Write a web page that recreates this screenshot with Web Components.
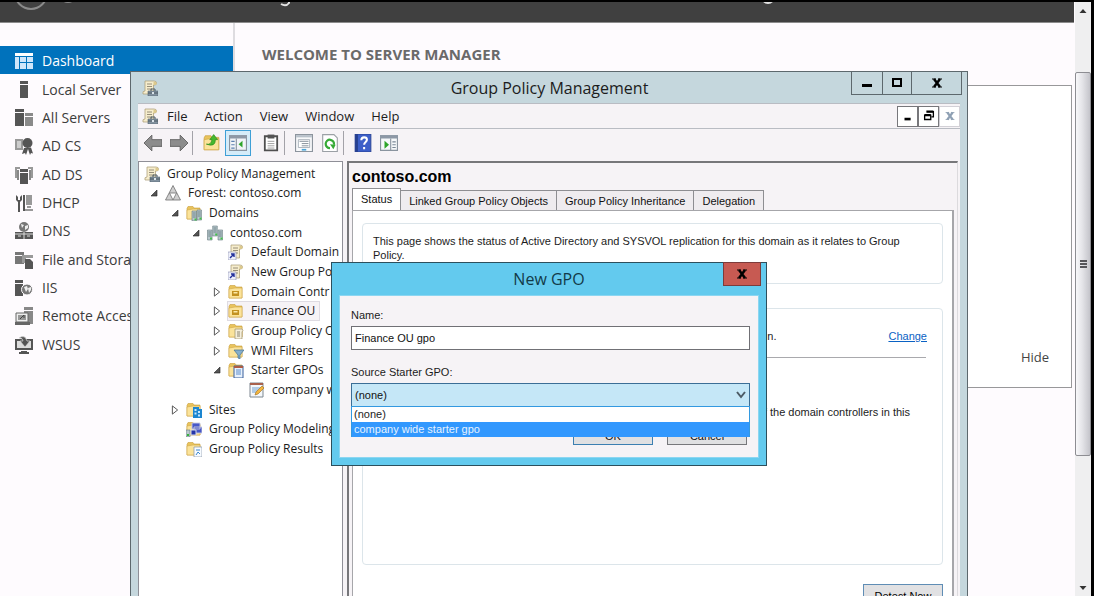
<!DOCTYPE html>
<html lang="en">
<head>
<meta charset="utf-8">
<title>Server Manager</title>
<style>
  html, body {
    height: 100%;
    margin: 0;
  }
  body {
    overflow: hidden;
    background: #fefbfe;
    font: 13px/18px "Open Sans", "Noto Sans", sans-serif;
    color: #1c1c1c;
    --classic: 11px/14px "Liberation Sans", Arial, sans-serif;
    --face: #f6f3f6;
  }
</style>
</head>
<body>
<server-manager></server-manager>

<script>
const folder = '<path d="M1 3.5l1-2h5l1 1.500h6V14H1z" fill="#e9c45c" stroke="#c99e3a" stroke-width=".6"/><path d="M1 14V5l6-1h7v10z" fill="#fbe39a" stroke="#d0a848" stroke-width=".6"/>'
const scroll = '<path d="M3 1h9q2.500 0 2.500 2t-2 2h-1V14H1q-1-3 2-3z" fill="#f6edcd" stroke="#a89870" stroke-width=".7"/><path d="M5 4h5M5 6.500h5M5 9h5" stroke="#8c8571" stroke-width=".9"/><path d="M11.500 5V2q2-1 3 1t-3 2z" fill="#dcc98c"/>'
const server = (x, y) => `<path d="M${x} ${y}h4.600v10H${x}z" fill="#b9c8cd" stroke="#667a80" stroke-width=".6"/><path d="M${x + 0.800} ${y + 2}h3M${x + 0.800} ${y + 4}h3M${x + 0.800} ${y + 6}h3" stroke="#5b7379" stroke-width=".8"/><path d="M${x + 2.500} ${y + 7.500}h2v2h-2z" fill="#42c24a"/>`

const icons = {
  dashboard: '<path d="M0 1h18v3H0zM0 5h4v12H0zM5 5h6v5H5zM12 5h6v5h-6zM5 11h6v6H5zM12 11h6v6h-6z" fill="#cfe6fa"/><path d="M0 1h18v3H0z" fill="#fff"/>',
  local: '<path d="M5 0h8v3H5z" fill="#555"/><path d="M5 4h8v13H5z" fill="#555"/>',
  all: '<path d="M0 0h9v3H0zM0 4h9v13H0z" fill="#555"/><path d="M10 4h8v3h-8zM10 8h8v9h-8z" fill="#8a8a8a"/>',
  cert: '<path d="M0 2h8v11H0z" fill="#999"/><path d="M2 4h4v7H2z" fill="#ccc"/><circle cx="12.500" cy="6" r="5" fill="#555"/><path d="M9 11l-2 6 3-1 1 2 2-6 2 6 1-2 2 .5-2-6z" fill="#555"/>',
  adds: '<path d="M0 1h5v2H2v9H0zM13 1h5v11h-2V3h-3z" fill="#999"/><path d="M2 4h2v10H2zM14 4h2v10h-2z" fill="#888"/><path d="M5 3h8v3H5zM5 7h8v11H5z" fill="#555"/>',
  dhcp: '<path d="M1 1l2 2v3h2V3l2-2v5L5 8v10H3V8L1 6z" fill="#555"/><path d="M8 1h2v16H8z" fill="#555"/><path d="M11 1h6v10h-6zM12 12h4v2h-4zM10 15h8v2h-8z" fill="#999"/>',
  dns: '<circle cx="9" cy="5" r="5" fill="#777"/><path d="M6 2l3 1-2 3zM10 4l3-1v3l-3 2z" fill="#eee"/><path d="M0 10h18v7H0z" fill="#555"/><path d="M9 10v7M3 14h3M12 14h3M0 12h18" stroke="#ddd"/>',
  files: '<path d="M0 1h9v3H0zM0 5h9v8H0z" fill="#777"/><path d="M7 4h11v3h-7v5H7z" fill="#999"/><path d="M10 8h5l3 3v7h-8z" fill="#555"/>',
  iis: '<path d="M0 1h8v3H0zM0 5h8v12H0z" fill="#555"/><circle cx="12" cy="10.500" r="5.500" fill="#777" stroke="#fefbfe"/><path d="M9 8l3-1 1 3-2 3zM13 9l3-1v3l-2 3z" fill="#eee"/>',
  remote: '<path d="M9 0h9v3H9zM9 4h9v13H9z" fill="#888"/><path d="M1 6h12v9H1z" fill="#eee" stroke="#666"/><path d="M3 8h8v5H3z" fill="#999"/><path d="M0 15h15v3H0z" fill="#666"/><path d="M5 12l4-4M9 8v3" stroke="#444" fill="none"/>',
  wsus: '<path d="M0 3h18v11H0zM6 15h6v1h2v2H4v-2h2z" fill="#555"/><path d="M2 5h14v7H2z" fill="#ddd"/><path d="M4 2q6-4 8 3h3l-5 6-5-6h3q0-3-4-3z" fill="#555" stroke="#ddd" stroke-width=".7"/>',

  gpm: scroll + '<path d="M6 11h10v5H6z" fill="#8393a0" stroke="#536370" stroke-width=".6"/><path d="M9 11V9h4v2M6 13h10" fill="none" stroke="#4a5862"/><path d="M10 12h2v2h-2z" fill="#dbe4ea"/>',
  forest: '<path d="M8 .5L15.500 15H.5z" fill="#cfcfcf" stroke="#707070" stroke-width=".8"/><path d="M4.500 8h7L8 15z" fill="#fff" stroke="#707070" stroke-width=".8"/>',
  domains: folder + server(6, 6) + server(11, 5),
  domain: server(0.500, 5) + server(11, 5) + server(5.700, 1),
  gpolink: scroll + '<path d="M0 8h8v8H0z" fill="#eef0fa" stroke="#8a8fae" stroke-width=".6"/><path d="M2 14l4-4M3 10h3v3" stroke="#23309a" stroke-width="1.400" fill="none"/>',
  ou: folder + '<path d="M4 7h7v5H4z" fill="#c39120"/><path d="M5.500 8h4v1.500h-4z" fill="#fbe9a8"/>',
  objects: folder + '<path d="M7 6h7q2 1 0 3v7H7z" fill="#f5efdc" stroke="#9c8f6a" stroke-width=".7"/><path d="M9 9h3M9 11h3M9 13h3" stroke="#8c8571"/>',
  wmi: folder + '<path d="M6 7h10l-4 5v4l-2-1v-3z" fill="#86aecb" stroke="#44708f" stroke-width=".7"/>',
  starter: folder + '<path d="M6 4h9v12H6z" fill="#e8f1fb" stroke="#385f9c"/><path d="M6 4h9v2H6z" fill="#ae5b45"/><path d="M8 8h5M8 10h5M8 12h5" stroke="#5d8ccb"/>',
  gpo: '<path d="M1 1h13v14H1z" fill="#f4f7fa" stroke="#7d8790"/><path d="M1 1h13v2H1z" fill="#a9614c"/><path d="M3 6h9M3 8h6M3 10h4" stroke="#6f9fd0"/><path d="M6 13l1-3 6-6 2 2-6 6z" fill="#f4b63e" stroke="#9a6b1c" stroke-width=".6"/>',
  sites: folder + '<path d="M7 5h6v2h3v9H7z" fill="#1c86d0"/><path d="M8.500 7h2v2h-2zM8.500 10.500h2v2h-2zM12 9h2v2h-2zM12 12.500h2v2h-2z" fill="#c3e6ff"/>',
  modeling: folder + '<path d="M6 2h8v6H6zM8 6h8v6H8z" fill="#4858c8" stroke="#c8cbe0" stroke-width=".9"/><path d="M0 9h4v7H0z" fill="#bac8cd" stroke="#667a80" stroke-width=".6"/><path d="M5 9h5v5H5z" fill="#2736a8" stroke="#d5d8ea"/><path d="M1 13h2v2H1z" fill="#35b33c"/>',
  results: folder + '<path d="M8 6h8v10H8z" fill="#f7fbff" stroke="#8696a6" stroke-width=".7"/><path d="M10 9h4M10 14l2-3 2 2" stroke="#3b86cf" fill="none"/>',

  back: '<path d="M0 8l7-7v4h9v6H7v4z" fill="#8c8c8c" stroke="#606060" stroke-width=".8"/>',
  forward: '<path d="M16 8L9 1v4H0v6h9v4z" fill="#8c8c8c" stroke="#606060" stroke-width=".8"/>',
  up: folder + '<path d="M3 9q4 1 5-4H6l3.500-4.500L13 5h-2q0 7-8 4z" fill="#46b82e" stroke="#2b8a1b" stroke-width=".6"/>',
  pane: '<path d="M.5 1.500h15v13H.5z" fill="#f1f4f8" stroke="#8a949f"/><path d="M0 1h16v3H0z" fill="#8d98a6"/><path d="M2 6.500h3M2 9.500h3M2 12.500h3" stroke="#5c7fae"/><path d="M6.500 4v11" stroke="#8a949f"/><path d="M12 6v6L8.500 9z" fill="#2ea52a"/>',
  clip: '<path d="M2.500 2h11v12.500h-11z" fill="#fff" stroke="#4f4f4f" stroke-width="1.600"/><path d="M5 .5h6V4H5z" fill="#555"/><path d="M5 6.500h6M5 8.500h6M5 10.500h6M5 12.500h6" stroke="#999" stroke-width=".8"/>',
  props: '<path d="M.5.5h15v15H.5z" fill="#f8f9fb" stroke="#8c949d"/><path d="M1 1h14v2H1z" fill="#b8c1ca"/><path d="M3 5h10v7H3z" fill="#fff" stroke="#9ba5af" stroke-width=".7"/><path d="M4 6.500h8M6 8.500h6M6 10.500h6" stroke="#7d8893" stroke-width=".8"/><path d="M6 14h4" stroke="#4ba5d8" stroke-width="1.500"/>',
  refresh: '<path d="M1.500.5h10l3 3v12h-13z" fill="#fff" stroke="#9ba0a5"/><path d="M11.500 9.500A3.700 3.700 0 1 0 8 12.500" fill="none" stroke="#36aa36" stroke-width="2"/><path d="M8 9l5 .5-2 4z" fill="#36aa36"/>',
  help: '<path d="M1 0h14v16H1z" fill="#3c5fc8" stroke="#27408f" stroke-width=".8"/><path d="M1 0h2.500v16H1z" fill="#27408f"/><path d="M6.500 5.500q0-2.500 2.500-2.500t2.500 2.200c0 1.800-2.500 2-2.500 4.300M9 11.500v2" stroke="#fff" stroke-width="1.800" fill="none"/>',
  action: '<path d="M.5 1.500h15v13H.5z" fill="#f6f8fa" stroke="#8a949f"/><path d="M0 1h16v3H0z" fill="#8d98a6"/><path d="M9.500 4v11" stroke="#8a949f"/><path d="M11 7h3M11 9.500h3M11 12h3" stroke="#7a8796"/><path d="M4 6v7l4-3.500z" fill="#2ea52a"/>',

  min: '<path d="M3 9h10v3H3z" fill="currentColor"/>',
  minchild: '<path d="M4 10h7v3H4z" fill="currentColor"/>',
  max: '<path d="M4 4h8v7H4z" fill="none" stroke="currentColor" stroke-width="2"/>',
  close: '<path d="M5 4l6 8M11 4l-6 8" stroke="currentColor" stroke-width="2.500"/><path d="M3 4h4M9 4h4M3 12h4M9 12h4" stroke="currentColor" stroke-width="1"/>',
  restore: '<path d="M6 3h7v6h-2M3 7h7v5H3z" fill="none" stroke="currentColor" stroke-width="1.500"/><path d="M5 3h8M3 7h7" stroke="currentColor" stroke-width="2.500"/>',
  open: '<path d="M12 4v8H4z" fill="#555" stroke="#222" stroke-width=".8"/>',
  shut: '<path d="M4.500 2.500l7 5.500-7 5.500z" fill="#fff" stroke="#555" stroke-width="1.300"/>',
  arrowup: '<path d="M8 6l3.500 4h-7z" fill="#333"/>',
  arrowdown: '<path d="M8 10l3.500-4h-7z" fill="#333"/>'
}

class UiIcon extends HTMLElement {
  constructor () {
    super()
    this.attachShadow({ mode: 'open' })
  }

  connectedCallback () {
    const name = this.getAttribute('name')
    const size = this.getAttribute('grid') || 16

    this.shadowRoot.innerHTML = `
      <style>
        :host { display: block; flex: none; width: var(--size, 16px); height: var(--size, 16px); }
        svg { display: block; width: 100%; height: 100%; }
      </style>
      <svg viewBox="0 0 ${size} ${size}" aria-hidden="true">${icons[name] || ''}</svg>
    `
  }
}

class NavItem extends HTMLElement {
  constructor () {
    super()
    this.attachShadow({ mode: 'open' })
  }

  connectedCallback () {
    this.shadowRoot.innerHTML = `
      <style>
        :host { display: flex; }
        a {
          flex: 1;
          display: flex;
          align-items: center;
          gap: 9px;
          padding: 2px 0 0 15px;
          font-size: 14px;
          white-space: nowrap;
          color: #3c3c3c;
          text-decoration: none;
          --size: 18px;
        }
        :host([current]) a { background: #0072bc; color: #fff; }
      </style>
      <a href="#"><ui-icon name="${this.getAttribute('icon')}" grid="18"></ui-icon><span><slot></slot></span></a>
    `
  }
}

class TreeItem extends HTMLElement {
  constructor () {
    super()
    this.attachShadow({ mode: 'open' })
  }

  connectedCallback () {
    const level = Number(this.getAttribute('level'))
    const arrow = this.getAttribute('arrow') || ''

    this.shadowRoot.innerHTML = `
      <style>
        :host {
          display: flex;
          align-items: center;
          box-sizing: border-box;
          padding-left: ${Math.max(level * 21 - 12, 5)}px;
          white-space: nowrap;
        }
        .arrow { --size: 12px; margin-right: 5px; }
        .label { display: flex; align-items: center; gap: 7px; padding-right: 4px; }
        :host([selected]) .label { background: var(--face); box-shadow: 0 0 0 1px #dedbe2; }
      </style>
      ${level ? `<ui-icon class="arrow" name="${arrow}"></ui-icon>` : ''}
      <span class="label"><ui-icon name="${this.getAttribute('icon')}"></ui-icon><span><slot></slot></span></span>
    `
  }
}

class ScrollBar extends HTMLElement {
  constructor () {
    super()
    this.attachShadow({ mode: 'open' }).innerHTML = `
      <style>
        :host { display: flex; flex-direction: column; width: 16px; background: #efeff0; }
        button { display: block; height: 17px; padding: 0; border: 0; background: none; }
        .before { flex: 53; }
        .after { flex: 123; }
        .thumb {
          flex: 384;
          display: flex;
          flex-direction: column;
          justify-content: center;
          align-items: center;
          gap: 1px;
          border: 1px solid #8d8d92;
          border-radius: 2px;
          background: linear-gradient(90deg, #f8f8fa, #e4e4e8 45%, #c4c4ca);
        }
        .thumb i { width: 7px; height: 2px; background: #55555a; }
      </style>
      <button aria-label="Scroll up"><ui-icon name="arrowup"></ui-icon></button>
      <div class="before"></div>
      <div class="thumb"><i></i><i></i><i></i></div>
      <div class="after"></div>
      <button aria-label="Scroll down"><ui-icon name="arrowdown"></ui-icon></button>
    `
  }
}

class StatusPage extends HTMLElement {
  constructor () {
    super()
    this.attachShadow({ mode: 'open' }).innerHTML = `
      <style>
        :host {
          display: flex;
          flex-direction: column;
          box-sizing: border-box;
          padding: 5px 3px 0;
          border: solid #77777a;
          border-width: 2px 1px 0 2px;
          border-right-color: #dcdadd;
          background: var(--face);
          font: var(--classic);
        }
        h2 { margin: 0 0 2px; font: bold 16px/18px "Liberation Sans", sans-serif; color: #000; }
        .tabs { display: flex; align-items: flex-end; }
        .tabs button {
          height: 20px;
          padding: 0 8px;
          border: 1px solid #8e8e92;
          border-width: 1px 1px 0 0;
          background: #efecef;
          font: inherit;
          color: #111;
        }
        .tabs button.on { height: 23px; margin-bottom: -1px; padding-bottom: 3px; border-left-width: 1px; background: #fff; }
        .page {
          flex: 1;
          display: flex;
          flex-direction: column;
          padding: 12px 9px 0;
          border: 1px solid #a6a6aa;
          border-bottom: 0;
          border-right-width: 2px;
          background: #fff;
        }
        .box { border: 1px solid #dce5ea; border-radius: 4px; }
        .intro { margin-bottom: 24px; padding: 10px 10px 21px; }
        .detail { height: 255px; }
        .base { display: flex; gap: 112px; margin: 20px 15px 14px 10px; }
        .base span, .note { flex: 1; text-align: right; }
        a { color: #0a62c4; }
        hr { margin: 0 16px 0 10px; border: 0; border-top: 1px solid #a9a9ad; }
        p { margin: 0; }
        .note { margin: 47px 32px 0 10px; }
        .detect {
          align-self: flex-end;
          width: 80px;
          height: 24px;
          margin-top: 19px;
          padding: 0;
          border: 1px solid #5f8db5;
          background: #e1e1e3;
          font: inherit;
        }
      </style>
      <h2>contoso.com</h2>
      <div class="tabs" role="tablist">
        <button class="on" role="tab" aria-selected="true">Status</button>
        <button role="tab">Linked Group Policy Objects</button>
        <button role="tab">Group Policy Inheritance</button>
        <button role="tab">Delegation</button>
      </div>
      <div class="page">
        <div class="box intro">
          <p>This page shows the status of Active Directory and SYSVOL replication for this domain as it relates to Group<br>Policy.</p>
        </div>
        <div class="box detail">
          <div class="base"><span>the baseline domain controller for this domain.</span><a href="#">Change</a></div>
          <hr>
          <p class="note">infrastructure status from all of the domain controllers in this</p>
        </div>
        <button class="detect">Detect Now</button>
      </div>
    `
  }
}

class PolicyWindow extends HTMLElement {
  constructor () {
    super()
    this.attachShadow({ mode: 'open' }).innerHTML = `
      <style>
        :host {
          display: flex;
          flex-direction: column;
          box-sizing: border-box;
          padding: 0 7px;
          border: 1px solid #5d686d;
          border-bottom: 0;
          background: #c5d7dd;
        }
        button { padding: 0; border: 0; background: none; font: inherit; color: inherit; }
        header { display: flex; align-items: flex-start; height: 31px; }
        header > ui-icon { margin: 8px 0 0 4px; }
        h1 { flex: 1; margin: 5px 0 0 89px; text-align: center; font-size: 16px; line-height: 22px; font-weight: normal; }
        .caption { display: flex; margin: -1px -2px 0 0; }
        .caption button {
          display: grid;
          place-items: center;
          box-sizing: border-box;
          width: 30px;
          height: 24px;
          margin-left: -1px;
          border: 1px solid #5d686d;
          color: #000;
        }
        .caption button:first-child { width: 32px; }
        .caption button:last-child { width: 51px; }
        .menu { display: flex; align-items: center; height: 24px; background: var(--face); border: solid #b9bcc3; border-width: 1px 0; }
        nav { flex: 1; display: flex; gap: 17px; margin-left: 9px; }
        .menu > ui-icon { margin-left: 4px; }
        .mdi { display: flex; background: #fff; }
        .mdi button { display: grid; place-items: center; box-sizing: border-box; width: 21px; height: 21px; border: 1px solid #77777b; color: #000; --size: 14px; }
        .mdi button:last-child { border-color: #d2d0d6; color: #8fa0b4; }
        .tools { display: flex; align-items: center; box-sizing: border-box; height: 32px; padding: 0 0 4px 2px; background: var(--face); }
        .tools button { box-sizing: border-box; padding: 3px; border: 1px solid transparent; --size: 18px; }
        .tools button.on { border-color: #3e9fd6; background: #d5ecf9; }
        .tools i { width: 1px; height: 24px; margin-right: 6px; background: #a3a2a8; }
        .tools .clip { margin-left: 7px; }
        .panes { flex: 1; display: flex; gap: 4px; padding-right: 2px; background: var(--face); min-height: 0; }
        .tree { flex: 0 0 205px; box-sizing: border-box; border: 1px solid #8f8f97; border-bottom: 0; overflow: hidden; background: #fff; font-size: 12px; }
        .rows { display: grid; grid-auto-rows: 1fr; height: 295px; padding-top: 2px; }
        status-page { flex: 1; min-width: 0; }
      </style>
      <header>
        <ui-icon name="gpm"></ui-icon>
        <h1>Group Policy Management</h1>
        <div class="caption">
          <button aria-label="Minimize"><ui-icon name="min"></ui-icon></button>
          <button aria-label="Maximize"><ui-icon name="max"></ui-icon></button>
          <button aria-label="Close"><ui-icon name="close"></ui-icon></button>
        </div>
      </header>
      <div class="menu">
        <ui-icon name="gpm"></ui-icon>
        <nav>
          <button>File</button><button>Action</button><button>View</button><button>Window</button><button>Help</button>
        </nav>
        <div class="mdi">
          <button aria-label="Minimize child"><ui-icon name="minchild"></ui-icon></button>
          <button aria-label="Restore child"><ui-icon name="restore"></ui-icon></button>
          <button aria-label="Close child"><ui-icon name="close"></ui-icon></button>
        </div>
      </div>
      <div class="tools">
        <button aria-label="Back"><ui-icon name="back"></ui-icon></button>
        <button aria-label="Forward"><ui-icon name="forward"></ui-icon></button>
        <i></i>
        <button aria-label="Up"><ui-icon name="up"></ui-icon></button>
        <button class="on" aria-label="Show tree"><ui-icon name="pane"></ui-icon></button>
        <button class="clip" aria-label="Copy"><ui-icon name="clip"></ui-icon></button>
        <i></i>
        <button aria-label="Properties"><ui-icon name="props"></ui-icon></button>
        <button aria-label="Refresh"><ui-icon name="refresh"></ui-icon></button>
        <i></i>
        <button aria-label="Help topics"><ui-icon name="help"></ui-icon></button>
        <button aria-label="Show actions"><ui-icon name="action"></ui-icon></button>
      </div>
      <div class="panes">
        <div class="tree">
          <div class="rows">
            <tree-item level="0" icon="gpm">Group Policy Management</tree-item>
            <tree-item level="1" arrow="open" icon="forest">Forest: contoso.com</tree-item>
            <tree-item level="2" arrow="open" icon="domains">Domains</tree-item>
            <tree-item level="3" arrow="open" icon="domain">contoso.com</tree-item>
            <tree-item level="4" icon="gpolink">Default Domain</tree-item>
            <tree-item level="4" icon="gpolink">New Group Po</tree-item>
            <tree-item level="4" arrow="shut" icon="ou">Domain Contr</tree-item>
            <tree-item level="4" arrow="shut" icon="ou" selected>Finance OU</tree-item>
            <tree-item level="4" arrow="shut" icon="objects">Group Policy O</tree-item>
            <tree-item level="4" arrow="shut" icon="wmi">WMI Filters</tree-item>
            <tree-item level="4" arrow="open" icon="starter">Starter GPOs</tree-item>
            <tree-item level="5" icon="gpo">company w</tree-item>
            <tree-item level="2" arrow="shut" icon="sites">Sites</tree-item>
            <tree-item level="2" icon="modeling">Group Policy Modeling</tree-item>
            <tree-item level="2" icon="results">Group Policy Results</tree-item>
          </div>
        </div>
        <status-page></status-page>
      </div>
    `
  }
}

class GpoDialog extends HTMLElement {
  constructor () {
    super()
    this.attachShadow({ mode: 'open' }).innerHTML = `
      <style>
        :host {
          display: block;
          box-sizing: border-box;
          padding: 0 7px 7px;
          border: 1px solid #2c4f5c;
          background: #63caee;
        }
        header { display: flex; align-items: flex-start; height: 32px; }
        h1 { flex: 1; margin: 5px 0 0 36px; text-align: center; font-size: 16px; line-height: 22px; font-weight: normal; color: #123a48; }
        .close {
          display: grid;
          place-items: center;
          box-sizing: border-box;
          width: 38px;
          height: 24px;
          margin: -1px -2px 0 0;
          padding: 0;
          border: 1px solid #7c3b3b;
          background: #c75a52;
          color: #000;
        }
        form { display: flex; flex-direction: column; padding: 12px 8px 12px 11px; border: 1px solid #8cd6f1; background: var(--face); font: var(--classic); }
        input, select {
          box-sizing: border-box;
          width: 100%;
          height: 24px;
          margin: 0;
          padding: 0 3px;
          border: 1px solid #707075;
          border-radius: 0;
          background: #fff;
          font: inherit;
          color: #111;
        }
        label { margin-bottom: 4px; }
        input { margin-bottom: 15px; }
        .combo { position: relative; }
        select { display: block; appearance: none; border-color: #3b6e96; background: #c5e7f7; }
        .combo svg { position: absolute; right: 4px; top: 8px; }
        ul {
          position: absolute;
          z-index: 1;
          left: 0;
          right: 0;
          top: 23px;
          margin: 0;
          padding: 0;
          border: 1px solid #3399e0;
          border-bottom: 0;
          background: #fff;
          list-style: none;
        }
        li { height: 15px; padding: 0 2px; line-height: 15px; }
        li[aria-selected] { background: #3298fe; color: #e6f3ff; }
        footer { display: flex; justify-content: flex-end; gap: 14px; margin: 14px 3px 0 0; }
        footer button { width: 80px; height: 24px; padding: 5px 0 0; border: 1px solid #77777b; background: #e0e0e2; font: inherit; color: #111; }
        footer button:first-child { border-color: #3c7fb1; }
      </style>
      <header>
        <h1>New GPO</h1>
        <button class="close" aria-label="Close"><ui-icon name="close"></ui-icon></button>
      </header>
      <form>
        <label for="name">Name:</label>
        <input id="name" value="Finance OU gpo">
        <label for="source">Source Starter GPO:</label>
        <div class="combo">
          <select id="source">
            <option>(none)</option>
            <option>company wide starter gpo</option>
          </select>
          <svg width="10" height="8" viewBox="0 0 10 8" aria-hidden="true"><path d="M1 1l4 5 4-5" fill="none" stroke="#4c5a64" stroke-width="2"/></svg>
          <ul role="listbox" aria-label="Source Starter GPO">
            <li role="option">(none)</li>
            <li role="option" aria-selected="true">company wide starter gpo</li>
          </ul>
        </div>
        <footer>
          <button type="button">OK</button>
          <button type="button">Cancel</button>
        </footer>
      </form>
    `
  }
}

class ServerManager extends HTMLElement {
  constructor () {
    super()
    this.attachShadow({ mode: 'open' }).innerHTML = `
      <style>
        :host {
          position: relative;
          display: flex;
          box-sizing: border-box;
          height: 100vh;
          overflow: hidden;
          border: solid #000;
          border-width: 2px 3px 0 0;
        }
        .app { flex: 1; display: flex; flex-direction: column; margin-right: 1px; }
        .banner { display: flex; height: 20px; overflow: hidden; background: #404040; border-bottom: 1px solid #8c8c8c; }
        .banner svg { flex: none; display: block; }
        .body { flex: 1; display: flex; }
        .side { flex: 0 0 233px; border-right: 2px solid #dedce0; padding-top: 23px; }
        .side div { display: grid; grid-auto-rows: 1fr; height: 312px; }
        main { flex: 1; display: flex; flex-direction: column; padding: 21px 2px 0 27px; }
        h2 { margin: 0 0 21px; font-size: 15px; line-height: 20px; font-weight: bold; color: #6a6a6a; }
        .card {
          display: flex;
          justify-content: flex-end;
          align-items: flex-end;
          box-sizing: border-box;
          height: 303px;
          padding: 0 22px 21px;
          border: 1px solid #98989a;
          background: #fff;
        }
        .card button { padding: 0; border: 0; background: none; font: inherit; color: #444; }
        policy-window { position: absolute; left: 130px; right: 123px; top: 69px; bottom: 0; }
        gpo-dialog { position: absolute; left: 331px; top: 260px; width: 436px; }
      </style>
      <div class="app">
        <div class="banner">
          <svg width="300" height="20" viewBox="0 0 300 20" aria-hidden="true"><circle cx="31" cy="-9" r="16" fill="none" stroke="#8a8a8a" stroke-width="2"/><circle cx="68" cy="-8" r="9" fill="#8a8a8a"/><path d="M281 2q5 3 8-1V-2" fill="none" stroke="#e4e4e4" stroke-width="2"/></svg>
          <svg width="500" height="20" viewBox="0 0 500 20" aria-hidden="true"><circle cx="468" cy="-5" r="6" fill="none" stroke="#e4e4e4" stroke-width="2"/></svg>
        </div>
        <div class="body">
          <nav class="side">
            <div>
              <nav-item icon="dashboard" current>Dashboard</nav-item>
              <nav-item icon="local">Local Server</nav-item>
              <nav-item icon="all">All Servers</nav-item>
              <nav-item icon="cert">AD CS</nav-item>
              <nav-item icon="adds">AD DS</nav-item>
              <nav-item icon="dhcp">DHCP</nav-item>
              <nav-item icon="dns">DNS</nav-item>
              <nav-item icon="files">File and Storage Services</nav-item>
              <nav-item icon="iis">IIS</nav-item>
              <nav-item icon="remote">Remote Access</nav-item>
              <nav-item icon="wsus">WSUS</nav-item>
            </div>
          </nav>
          <main>
            <h2>WELCOME TO SERVER MANAGER</h2>
            <section class="card"><button>Hide</button></section>
          </main>
        </div>
      </div>
      <scroll-bar></scroll-bar>
      <policy-window></policy-window>
      <gpo-dialog></gpo-dialog>
    `
  }
}

window.customElements.define('ui-icon', UiIcon)
window.customElements.define('nav-item', NavItem)
window.customElements.define('tree-item', TreeItem)
window.customElements.define('scroll-bar', ScrollBar)
window.customElements.define('status-page', StatusPage)
window.customElements.define('policy-window', PolicyWindow)
window.customElements.define('gpo-dialog', GpoDialog)
window.customElements.define('server-manager', ServerManager)
</script>
</body>
</html>
